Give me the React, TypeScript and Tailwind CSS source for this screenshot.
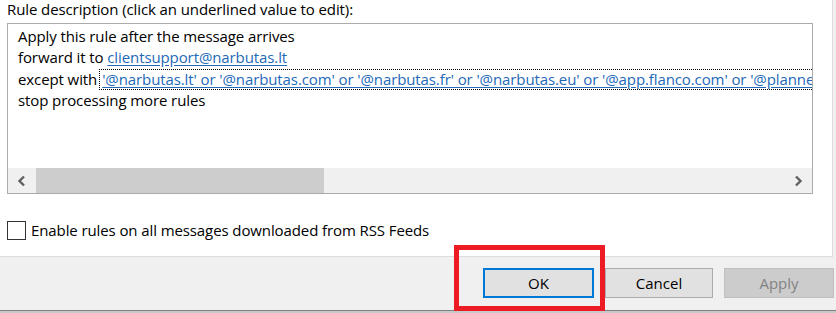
export default function App() {
  const font = "font-['Segoe_UI','Open_Sans','Noto_Sans',sans-serif]"

  return (
    <div className={`relative w-[836px] h-[313px] overflow-hidden bg-[#f0f0f0] text-black ${font}`}>
      {/* Upper white panel */}
      <div className="w-[833px] h-[257px] bg-white border-r border-b border-[#dcdcdc] pl-[7px] flex flex-col">
        <div className="h-[23px] text-[15px] leading-[18px] tracking-[-0.1px] whitespace-nowrap">
          Rule description (click an underlined value to edit):
        </div>

        {/* Rule description box */}
        <div className="w-[806px] h-[171px] border border-[#ababab] flex flex-col">
          <div className="flex-1 overflow-hidden pl-[10px] pt-[2px] text-[15px] leading-[21.3px] tracking-[-0.1px] whitespace-nowrap">
            <div>Apply this rule after the message arrives</div>
            <div>
              forward it to <span className="text-[#2469b8] underline underline-offset-2">clientsupport@narbutas.lt</span>
            </div>
            <div className="flex items-center h-[21.3px]">
              <span>except with</span>
              <span className="ml-[2px] pl-[2px] leading-[19px] border border-dotted border-black text-[#2469b8]">
                <span className="underline underline-offset-2">
                  '@narbutas.lt' or '@narbutas.com' or '@narbutas.fr' or '@narbutas.eu' or '@app.flanco.com' or '@planner5d.com'
                </span>
              </span>
            </div>
            <div>stop processing more rules</div>
          </div>

          {/* Horizontal scrollbar */}
          <div className="h-[25px] bg-[#f0f0f0] flex items-stretch">
            <div className="w-[28px] flex items-center justify-center">
              <svg width="10" height="12" viewBox="0 0 10 12">
                <polyline points="7,1.5 2.5,6 7,10.5" fill="none" stroke="#606060" strokeWidth="2.4" />
              </svg>
            </div>
            <div className="w-[288px] bg-[#cdcdcd]" />
            <div className="flex-1" />
            <div className="w-[28px] flex items-center justify-center">
              <svg width="10" height="12" viewBox="0 0 10 12">
                <polyline points="3,1.5 7.5,6 3,10.5" fill="none" stroke="#606060" strokeWidth="2.4" />
              </svg>
            </div>
          </div>
        </div>

        {/* Checkbox row */}
        <div className="mt-[27px] flex items-center gap-[5px]">
          <div className="w-[19px] h-[19px] border border-[#333333] bg-white" />
          <span className="text-[15px] leading-[19px] tracking-[-0.1px] whitespace-nowrap">
            Enable rules on all messages downloaded from RSS Feeds
          </span>
        </div>
      </div>

      {/* Button row */}
      <div className="h-[53px] flex items-start justify-end pt-[11px] pr-[2px] gap-[13px]">
        <button className="w-[111px] h-[30px] bg-[#e1e1e1] border-2 border-[#0078d7] text-[15px] leading-none">
          OK
        </button>
        <button className="w-[108px] h-[30px] bg-[#e1e1e1] border border-[#adadad] text-[15px] leading-none -ml-[2px]">
          Cancel
        </button>
        <button className="w-[110px] h-[30px] bg-[#cccccc] border border-[#bfbfbf] text-[#838383] text-[15px] leading-none -ml-[2px]">
          Apply
        </button>
      </div>

      {/* Window behind, peeking at the bottom */}
      <div className="h-[3px] bg-[#c8c8c8] border-t border-[#808080]" />

      {/* Red annotation frame */}
      <div className="absolute left-[454px] top-[245px] w-[151px] h-[66px] border-[5px] border-[#ed1c24]" />
    </div>
  )
}
